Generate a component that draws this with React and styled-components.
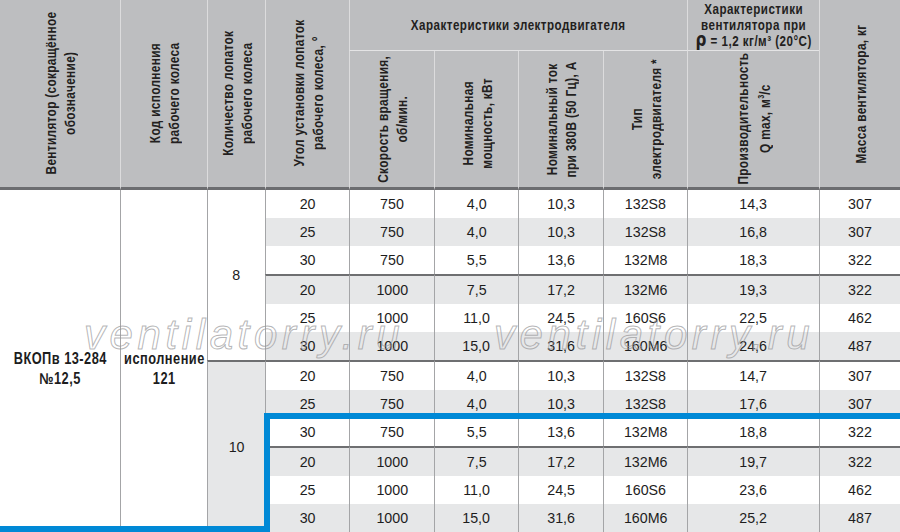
import React from "react";
import styled, { createGlobalStyle } from "styled-components";

const Global = createGlobalStyle`
  html, body { margin: 0; padding: 0; background: #ffffff; }
  body { font-family: "Liberation Sans", Arial, sans-serif; color: #1d1d1d; }
  * { box-sizing: border-box; }
`;

const COLS = [120, 87, 58, 84, 85, 84, 85, 84, 132, 81];
const ROWS = [51, 139, 28, 28, 28, 30, 28, 28, 30, 28, 28, 30, 28, 28];

const Page = styled.div`
  position: relative;
  width: 900px;
  height: 532px;
  overflow: hidden;
  background: #ffffff;
`;

const Grid = styled.div`
  display: grid;
  grid-template-columns: ${COLS.map((c) => c + "px").join(" ")};
  grid-template-rows: ${ROWS.map((r) => r + "px").join(" ")};
  width: 900px;
`;

const HeadCell = styled.div`
  grid-column: ${(p) => p.$col};
  grid-row: ${(p) => p.$row};
  background: #bdbec0;
  border-left: ${(p) => (p.$first ? "none" : "1px solid #dcdcdd")};
  border-bottom: ${(p) => (p.$group ? "1px solid #e4e4e5" : "3px solid #6c6d70")};
  display: flex;
  align-items: center;
  justify-content: center;
  padding: ${(p) => p.$pad || "0"};
  font-weight: 700;
  color: #231f20;
  overflow: visible;
`;

const VText = styled.div`
  writing-mode: vertical-rl;
  transform: rotate(180deg) scaleY(0.79);
  text-align: center;
  font-size: 15px;
  line-height: 19px;
  letter-spacing: 0.4px;
  white-space: nowrap;
`;

const GroupTitle = styled.div`
  text-align: center;
  font-size: 14.5px;
  line-height: 16px;
  letter-spacing: 0.6px;
  white-space: nowrap;
  transform: scaleX(0.8);
`;

const Sup = styled.span`
  font-size: 9px;
  vertical-align: 4px;
  letter-spacing: 0;
`;

const Rho = styled.span`
  font-family: "DejaVu Sans", sans-serif;
  font-size: 19px;
  font-weight: 700;
  line-height: 10px;
`;

const Cell = styled.div`
  grid-column: ${(p) => p.$col};
  grid-row: ${(p) => p.$row};
  background: ${(p) => (p.$shade ? "#e6e7e8" : "#ffffff")};
  border-left: ${(p) => (p.$first ? "none" : "1px solid #a4a5a7")};
  border-top: ${(p) => (p.$sep ? "2px solid #6e6f71" : "none")};
  display: flex;
  align-items: center;
  justify-content: center;
  color: #1d1d1d;
`;

const Num = styled.span`
  display: block;
  font-size: 15.5px;
  transform: scaleX(0.92);
  white-space: nowrap;
`;

const Merged = styled(Cell)`
  flex-direction: column;
  font-weight: 700;
  font-size: 16px;
  line-height: 20px;
  padding-top: ${(p) => p.$push || "0"};
`;

const BoldLine = styled.span`
  display: block;
  white-space: nowrap;
  letter-spacing: 0.6px;
  transform: scaleX(0.8);
`;

const Watermark = styled.div`
  position: absolute;
  left: ${(p) => p.$x}px;
  top: 311px;
  font-family: "Liberation Sans", Arial, sans-serif;
  font-style: italic;
  font-size: 42px;
  letter-spacing: 4.6px;
  color: transparent;
  -webkit-text-stroke: 1px rgba(150, 150, 152, 0.7);
  white-space: nowrap;
  pointer-events: none;
`;

const Blue = styled.div`
  position: absolute;
  background: #0089d6;
  left: ${(p) => p.$x}px;
  top: ${(p) => p.$y}px;
  width: ${(p) => p.$w}px;
  height: ${(p) => p.$h}px;
`;

const DATA = [
  ["20", "750", "4,0", "10,3", "132S8", "14,3", "307"],
  ["25", "750", "4,0", "10,3", "132S8", "16,8", "307"],
  ["30", "750", "5,5", "13,6", "132M8", "18,3", "322"],
  ["20", "1000", "7,5", "17,2", "132M6", "19,3", "322"],
  ["25", "1000", "11,0", "24,5", "160S6", "22,5", "462"],
  ["30", "1000", "15,0", "31,6", "160M6", "24,6", "487"],
  ["20", "750", "4,0", "10,3", "132S8", "14,7", "307"],
  ["25", "750", "4,0", "10,3", "132S8", "17,6", "307"],
  ["30", "750", "5,5", "13,6", "132M8", "18,8", "322"],
  ["20", "1000", "7,5", "17,2", "132M6", "19,7", "322"],
  ["25", "1000", "11,0", "24,5", "160S6", "23,6", "462"],
  ["30", "1000", "15,0", "31,6", "160M6", "25,2", "487"],
];

export default function App() {
  return (
    <Page>
      <Global />
      <Grid>
        <HeadCell $col="1" $row="1 / span 2" $first>
          <VText>Вентилятор (сокращённое<br />обозначение)</VText>
        </HeadCell>
        <HeadCell $col="2" $row="1 / span 2">
          <VText>Код исполнения<br />рабочего колеса</VText>
        </HeadCell>
        <HeadCell $col="3" $row="1 / span 2">
          <VText>Количество лопаток<br />рабочего колеса</VText>
        </HeadCell>
        <HeadCell $col="4" $row="1 / span 2">
          <VText>Угол установки лопаток<br />рабочего колеса, °</VText>
        </HeadCell>
        <HeadCell $col="5 / span 4" $row="1" $group>
          <GroupTitle>Характеристики электродвигателя</GroupTitle>
        </HeadCell>
        <HeadCell $col="9" $row="1" $group>
          <GroupTitle>
            Характеристики
            <br />
            вентилятора при
            <br />
            <Rho>ρ</Rho> = 1,2 кг/м³ (20°С)
          </GroupTitle>
        </HeadCell>
        <HeadCell $col="10" $row="1 / span 2">
          <VText>Масса вентилятора, кг</VText>
        </HeadCell>
        <HeadCell $col="5" $row="2">
          <VText>Скорость вращения,<br />об/мин.</VText>
        </HeadCell>
        <HeadCell $col="6" $row="2" $pad="8px 0 0 0">
          <VText>Номинальная<br />мощность, кВт</VText>
        </HeadCell>
        <HeadCell $col="7" $row="2">
          <VText>Номинальный ток<br />при 380В (50 Гц), А</VText>
        </HeadCell>
        <HeadCell $col="8" $row="2">
          <VText>Тип<br />электродвигателя *</VText>
        </HeadCell>
        <HeadCell $col="9" $row="2">
          <VText>Производительность<br />Q max, м<Sup>3</Sup>/с</VText>
        </HeadCell>

        <Merged $col="1" $row="3 / span 12" $first $push="16px">
          <BoldLine>ВКОПв 13-284</BoldLine>
          <BoldLine>№12,5</BoldLine>
        </Merged>
        <Merged $col="2" $row="3 / span 12" $push="16px">
          <BoldLine>исполнение</BoldLine>
          <BoldLine>121</BoldLine>
        </Merged>
        <Cell $col="3" $row="3 / span 6">
          <Num>8</Num>
        </Cell>
        <Cell $col="3" $row="9 / span 6" $shade $sep>
          <Num>10</Num>
        </Cell>

        {DATA.map((r, i) =>
          r.map((v, j) => (
            <Cell
              key={i + "-" + j}
              $col={String(4 + j)}
              $row={String(3 + i)}
              $shade={i % 2 === 1}
              $sep={i === 3 || i === 6 || i === 9}
            >
              <Num>{v}</Num>
            </Cell>
          ))
        )}
      </Grid>

      <Watermark $x={84}>ventilatorry.ru</Watermark>
      <Watermark $x={494}>ventilatorry.ru</Watermark>

      <Blue $x={264} $y={413} $w={636} $h={6} />
      <Blue $x={264} $y={413} $w={6} $h={119} />
      <Blue $x={0} $y={526} $w={270} $h={6} />
    </Page>
  );
}
